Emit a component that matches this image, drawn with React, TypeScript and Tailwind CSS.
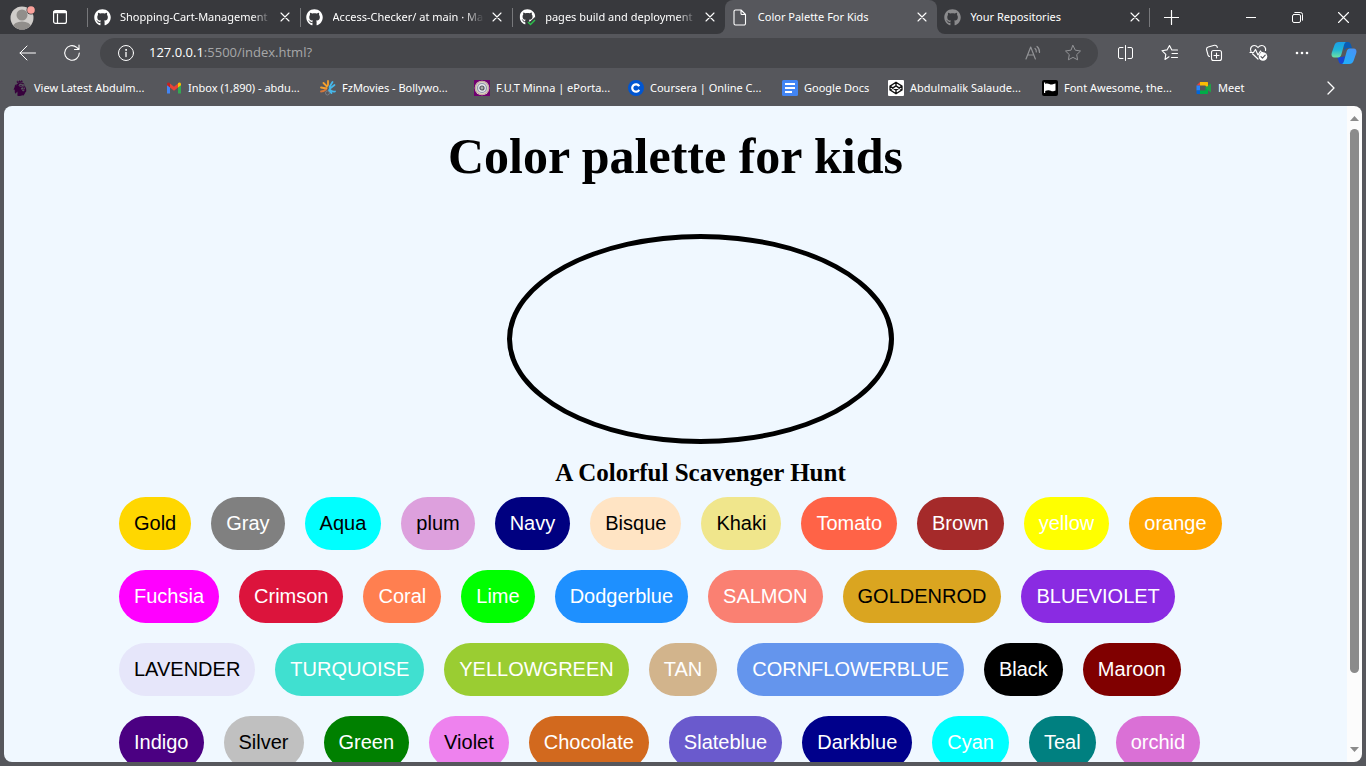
import React from 'react';
import { FaGithub } from 'react-icons/fa';
import { SiPremierleague } from 'react-icons/si';

const line = {
  fill: 'none',
  stroke: 'currentColor',
  strokeLinecap: 'round' as const,
  strokeLinejoin: 'round' as const,
};

function CloseIcon() {
  return (
    <svg width="10" height="10" viewBox="0 0 10 10" {...line} strokeWidth="1.1">
      <path d="M1 1l8 8M9 1L1 9" />
    </svg>
  );
}

function Octocat({ dim = false }: { dim?: boolean }) {
  return <FaGithub size={17} className={dim ? 'text-[#8b8b8d]' : 'text-white'} />;
}

function DeployIcon() {
  return (
    <svg width="17" height="17" viewBox="0 0 17 17">
      <FaGithub size={16} x="0.5" y="0" color="#fff" />
      <path d="M6 11l4.500 2 6-5.500V17H7z" fill="#38393d" />
      <path d="M9 13l2.500 2.500 4.500-4.500" fill="none" stroke="#2cc14c" strokeWidth="1.500" />
    </svg>
  );
}

function PageIcon() {
  return (
    <svg width="14" height="17" viewBox="0 0 14 17" {...line} strokeWidth="1.100">
      <path d="M2.500 1h5.500l4.500 4.500V14.500a1.500 1.500 0 0 1-1.500 1.500H2.500A1.500 1.500 0 0 1 1 14.500V2.500A1.500 1.500 0 0 1 2.500 1zM8 1v3.500a1 1 0 0 0 1 1h3.500" />
    </svg>
  );
}

const tabs = [
  { title: 'Shopping-Cart-Management', icon: <Octocat />, fade: true },
  { title: 'Access-Checker/ at main · Ma', icon: <Octocat />, fade: true },
  { title: 'pages build and deployment', icon: <DeployIcon />, fade: true },
  { title: 'Color Palette For Kids', icon: <PageIcon />, active: true },
  { title: 'Your Repositories', icon: <Octocat dim /> },
];

function TabStrip() {
  return (
    <header className="flex h-[34px] shrink-0 items-center bg-[#38393d]">
      <div className="flex w-[87px] shrink-0 items-center gap-[18px] pl-[10px]">
        <button aria-label="Profile">
          <svg width="25" height="25" viewBox="0 0 25 25">
            <defs>
              <clipPath id="face">
                <circle cx="12" cy="13" r="11.500" />
              </clipPath>
            </defs>
            <circle cx="12" cy="13" r="11.500" fill="#d0cdca" />
            <g clipPath="url(#face)" fill="#918e8b">
              <circle cx="12" cy="10" r="5.500" />
              <ellipse cx="12" cy="22" rx="9" ry="5.500" />
            </g>
            <circle cx="21" cy="5" r="4.500" fill="#38393d" />
            <circle cx="21" cy="5" r="3.800" fill="#fba19b" />
          </svg>
        </button>
        <button aria-label="Tab actions">
          <svg width="14" height="14" viewBox="0 0 14 14" {...line} strokeWidth="1.200">
            <rect x=".6" y=".6" width="12.800" height="12.800" rx="2" />
            <path d="M4.500 4v9" />
            <path d="M1.500 2h11" strokeWidth="2.500" />
          </svg>
        </button>
      </div>
      <nav className="flex h-full w-[1063px] min-w-0">
        {tabs.map((t, i) => (
          <div
            key={t.title}
            className={
              'relative flex h-full min-w-0 flex-1 items-center pr-[8px] pl-[6px] ' +
              (t.active ? 'rounded-t-[8px] bg-[#56575c]' : '')
            }
          >
            {i < 3 && <span className="absolute top-[8px] left-0 h-[19px] w-px bg-[#77787b]" />}
            {i === 4 && <span className="absolute top-[8px] right-0 h-[19px] w-px bg-[#77787b]" />}
            {t.active && (
              <>
                <svg className="absolute bottom-0 -left-[8px]" width="8" height="8" viewBox="0 0 8 8">
                  <path d="M8 0v8H0a8 8 0 0 0 8-8z" fill="#56575c" />
                </svg>
                <svg className="absolute -right-[8px] bottom-0" width="8" height="8" viewBox="0 0 8 8">
                  <path d="M0 0v8h8a8 8 0 0 1-8-8z" fill="#56575c" />
                </svg>
              </>
            )}
            <span className="flex w-[18px] shrink-0 justify-center">{t.icon}</span>
            <a
              href="#page"
              className={
                'ml-[9px] min-w-0 flex-1 overflow-hidden whitespace-nowrap ' +
                (t.fade ? '[mask-image:linear-gradient(to_right,black_calc(100%-20px),transparent)]' : '')
              }
            >
              {t.title}
            </a>
            <button aria-label={'Close ' + t.title} className="ml-[6px] p-[2px]">
              <CloseIcon />
            </button>
          </div>
        ))}
      </nav>
      <button aria-label="New tab" className="px-[14px]">
        <svg width="15" height="15" viewBox="0 0 15 15" {...line} strokeWidth="1.200">
          <path d="M7.500.5v14M.5 7.500h14" />
        </svg>
      </button>
      <div className="ml-auto flex h-full shrink-0">
        <button aria-label="Minimize" className="flex w-[46px] items-center justify-center">
          <svg width="10" height="10" viewBox="0 0 10 10" stroke="currentColor">
            <path d="M0 5.500h10" />
          </svg>
        </button>
        <button aria-label="Restore" className="flex w-[46px] items-center justify-center">
          <svg width="11" height="11" viewBox="0 0 11 11" {...line}>
            <rect x=".5" y="2.500" width="8" height="8" rx="1.500" />
            <path d="M2.800.5h5.700a2 2 0 0 1 2 2v5.700" />
          </svg>
        </button>
        <button aria-label="Close window" className="flex w-[46px] items-center justify-center">
          <svg width="11" height="11" viewBox="0 0 11 11" {...line} strokeWidth="1.100">
            <path d="M.5.5l10 10M10.500.5l-10 10" />
          </svg>
        </button>
      </div>
    </header>
  );
}

const starPath = 'M9 1.500l2.300 4.700 5.200.8-3.800 3.600.9 5.200L9 13.400l-4.600 2.400.9-5.200L1.500 7l5.200-.8z';

function ToolButton({ label, children }: { label: string; children: React.ReactNode }) {
  return (
    <button aria-label={label} className="flex h-[30px] w-[44px] shrink-0 items-center justify-center">
      {children}
    </button>
  );
}

function Toolbar() {
  return (
    <div className="flex shrink-0 items-center pt-[4px] pl-[6px]">
      <ToolButton label="Back">
        <svg width="18" height="16" viewBox="0 0 18 16" {...line}>
          <path d="M8 1L1 8l7 7M1 8h15.500" />
        </svg>
      </ToolButton>
      <ToolButton label="Refresh">
        <svg width="18" height="18" viewBox="0 0 18 18" {...line} strokeWidth="1.100">
          <path d="M16.300 9A7.300 7.300 0 1 1 13.700 3.400L16 5.500M16 1v4.500h-4.500" />
        </svg>
      </ToolButton>
      <div className="ml-[6px] flex h-[30px] min-w-0 flex-1 items-center rounded-full bg-[#46474b] pl-[17px]">
        <svg className="shrink-0" width="18" height="18" viewBox="0 0 18 18" {...line}>
          <circle cx="9" cy="9" r="7.500" />
          <path d="M9 8.500v4" strokeWidth="1.300" />
          <circle cx="9" cy="5.900" r=".5" fill="currentColor" />
        </svg>
        <a
          href="#page"
          className="ml-[14px] flex-1 truncate font-['Open_Sans',sans-serif] text-[13px] text-[#a6a7a9]"
        >
          <span className="text-white">127.0.0.1</span>:5500/index.html?
        </a>
        <button aria-label="Read aloud" className="flex w-[40px] justify-center text-[#929396]">
          <svg width="18" height="16" viewBox="0 0 18 16" {...line} strokeWidth="1.200">
            <path d="M2 14L6.700 2l4.700 12M3.500 10h6.400M11 3.500a4 4 0 0 1 1.300 3.500M13 1.500a7 7 0 0 1 2.500 6" />
          </svg>
        </button>
        <button aria-label="Add to favorites" className="mr-[5px] flex w-[40px] justify-center text-[#929396]">
          <svg width="18" height="18" viewBox="0 0 18 18" {...line}>
            <path d={starPath} />
          </svg>
        </button>
      </div>
      <div className="ml-[6px] flex shrink-0 items-center">
        <ToolButton label="Split screen">
          <svg width="18" height="18" viewBox="0 0 18 18" {...line}>
            <path d="M8.500 1.500v15M6 3.500H3A1.500 1.500 0 0 0 1.500 5v8A1.500 1.500 0 0 0 3 14.500h3M11 3.500h3A1.500 1.500 0 0 1 15.500 5v8a1.500 1.500 0 0 1-1.500 1.500h-3" />
          </svg>
        </ToolButton>
        <ToolButton label="Favorites">
          <svg width="18" height="18" viewBox="0 0 18 18" {...line} strokeWidth="1.100">
            <path d="M8 12.800l-4 2.700.8-5.200L1 6.700l5-.8L8.500 1.500l2.300 4.500H16.500M11 9.500h5.500M10.500 13.500h6" />
          </svg>
        </ToolButton>
        <ToolButton label="Collections">
          <svg width="18" height="18" viewBox="0 0 18 18" {...line} strokeWidth="1.100">
            <rect x="6.500" y="6.500" width="10" height="10" rx="2" />
            <path d="M11.500 9v5M9 11.500h5M4.500 12.500A2.500 2.500 0 0 1 3 11L1.500 5.500A2.400 2.400 0 0 1 3.200 3L9.500 1.300A2.300 2.300 0 0 1 12.300 3.500" />
          </svg>
        </ToolButton>
        <ToolButton label="Browser essentials">
          <svg width="19" height="18" viewBox="0 0 19 18" {...line} strokeWidth="1.200">
            <path d="M9 15L3.500 9.800M2 7.500C.5 4.500 2.500 1.500 5.200 1.500c1.700 0 3 1 3.800 2 .8-1 2.100-2 3.800-2 2.500 0 4.500 2.500 3.700 5M1 8.500h3.500l2-3L9 11l2.500-4 1 1.500h1" />
            <circle cx="14" cy="12.500" r="4.300" fill="#fff" stroke="none" />
            <path d="M12 12.700l1.500 1.500 2.700-3" stroke="#56575c" />
          </svg>
        </ToolButton>
        <ToolButton label="Settings and more">
          <svg width="14" height="4" viewBox="0 0 14 4" fill="currentColor">
            <circle cx="2" cy="2" r="1.300" />
            <circle cx="7" cy="2" r="1.300" />
            <circle cx="12" cy="2" r="1.300" />
          </svg>
        </ToolButton>
        <button aria-label="Copilot" className="mr-[9px] ml-[7px]">
          <svg width="26" height="24" viewBox="0 0 26 24">
            <defs>
              <linearGradient id="copA" x1="0" y1="0" x2="0" y2="1">
                <stop offset="0" stopColor="#1a9fe8" />
                <stop offset=".5" stopColor="#1fb5d8" />
                <stop offset="1" stopColor="#6fe3a0" />
              </linearGradient>
              <linearGradient id="copB" x1="1" y1="0" x2="0" y2="1">
                <stop offset="0" stopColor="#4c8ff5" />
                <stop offset="1" stopColor="#19b4fb" />
              </linearGradient>
            </defs>
            <path d="M12 1h5c2 0 2.500 1.500 3 3l1 3h-4c-2 0-3 1-3.500 3z" fill="#0a5cb4" />
            <path d="M5 16h6l3-1-1.500 8H11c-2 0-3-1-3.500-3-.5-2-1-4-2.500-4z" fill="#1746d2" />
            <path d="M8 1h7.500c-1.500 0-2 1.500-2.500 3L10.500 13c-.6 2-1.500 3.500-3.500 3.500H3.500C1 16.500 0 14.500.7 12L3.500 4C4.300 2 5.500 1 8 1z" fill="url(#copA)" />
            <path d="M18 23h-7.500c1.500 0 2-1.500 2.500-3l2.500-9c.6-2 1.500-3.500 3.500-3.500h3.500c2.500 0 3.500 2 2.800 4.500L22.500 20c-.8 2-2 3-4.500 3z" fill="url(#copB)" />
          </svg>
        </button>
      </div>
    </div>
  );
}

const bookmarks = [
  {
    label: 'View Latest Abdulm...',
    icon: <SiPremierleague size={16} color="#37003c" />,
  },
  {
    label: 'Inbox (1,890) - abdu...',
    icon: (
      <>
        <path d="M1 4v9.500h3V7z" fill="#4285f4" />
        <path d="M15 4v9.500h-3V7z" fill="#34a853" />
        <path d="M4 3.500l4 3.200 4-3.200v4L8 10.700 4 7.500z" fill="#ea4335" />
        <path d="M1 4.500C1 2.500 2.800 2 4 3.200v4.300L1 5.300z" fill="#c5221f" />
        <path d="M15 4.500c0-2-1.800-2.500-3-1.300v4.300l3-2.200z" fill="#fbbc04" />
      </>
    ),
  },
  {
    label: 'FzMovies - Bollywo...',
    icon: (
      <g fill="none" strokeWidth="1.800" strokeLinecap="round">
        <path d="M6.500 8.500L1 7.500M7 6.500L3.500 3M8 5V1" stroke="#f6a02c" />
        <path d="M1 11.500c2 0 3.500-.8 5-2" stroke="#d5783b" />
        <path d="M9.500 7l3-5M10 8.500L14.500 5M9.500 9.500c2 2 3.500 2.500 5.500 2" stroke="#46b8ea" />
        <path d="M9 10.500l2.500 2.500" stroke="#46b8ea" />
        <circle cx="7.500" cy="13" r="2" stroke="#777c85" strokeWidth="1" />
      </g>
    ),
  },
  {
    label: 'F.U.T Minna | ePorta...',
    icon: (
      <>
        <path d="M0 0h16v16H0z" fill="#710070" />
        <circle cx="8" cy="8" r="7.300" fill="#dcd6cc" />
        <circle cx="8" cy="8" r="6.500" fill="none" stroke="#b8958c" strokeWidth=".8" />
        <circle cx="8" cy="8" r="4.500" fill="#e6e6ee" stroke="#8d93ad" strokeWidth="1.200" />
        <circle cx="8" cy="8" r="2" fill="#aaa" stroke="#55565c" strokeWidth="1.200" />
      </>
    ),
  },
  {
    label: 'Coursera | Online C...',
    icon: (
      <>
        <circle cx="8" cy="8" r="8" fill="#0056d2" />
        <path d="M11.200 9.700a3.700 3.700 0 1 1 0-3.400" fill="none" stroke="#fff" strokeWidth="2.200" />
      </>
    ),
  },
  {
    label: 'Google Docs',
    icon: (
      <>
        <rect width="16" height="16" rx="1.500" fill="#4285f4" />
        <path d="M3 4h10M3 8h10M3 12h7" stroke="#fff" strokeWidth="1.800" />
      </>
    ),
  },
  {
    label: 'Abdulmalik Salaude...',
    icon: (
      <>
        <rect width="16" height="16" rx="1" fill="#fff" />
        <path
          d="M8 2.200l6 3.900v3.800l-6 3.900-6-3.900V6.100zM2 6.100l6 4 6-4M2 9.900l6-4 6 4M8 2.200v3.700M8 10.100v3.700"
          fill="none"
          stroke="#111"
          strokeWidth="1.300"
          strokeLinejoin="round"
        />
      </>
    ),
  },
  {
    label: 'Font Awesome, the...',
    icon: (
      <>
        <rect width="16" height="16" rx="2" fill="#000" />
        <path d="M2 2.500h1.200V13H2zM3.200 4c3-1.500 4.500 1 7 .5.800-.1 2-.7 3.300-1v7c-3.500 2-5-.8-7.300-.3-1 .2-2 .5-3 .8z" fill="#fff" />
      </>
    ),
  },
  {
    label: 'Meet',
    icon: (
      <>
        <path d="M4 2L.5 5.500H4z" fill="#ea4335" />
        <path d="M4 2h7c.8 0 1 .4 1 1v4.500L9.500 6V5.500H4z" fill="#fbbc04" />
        <path d="M.5 5.500H4v5H.5z" fill="#2684fc" />
        <path d="M.5 10.500H4V14H1.500c-.7 0-1-.4-1-1z" fill="#0066da" />
        <path d="M4 10.500h5.500V6L12 8v5c0 .7-.4 1-1 1H4z" fill="#00ac47" />
        <path d="M9.500 8L14 4c.5-.4 1-.2 1 .4v7.200c0 .6-.5.800-1 .4z" fill="#23a047" />
      </>
    ),
  },
];

function BookmarkBar() {
  return (
    <div className="flex h-[38px] shrink-0 items-center pt-[2px] pl-[12px]">
      {bookmarks.map((b) => (
        <a
          key={b.label}
          href="#page"
          className={
            'flex shrink-0 items-center gap-[6px] whitespace-nowrap ' +
            (b.label === 'Google Docs' ? 'w-[106px]' : 'w-[154px] last-of-type:w-[80px]')
          }
        >
          <svg className="shrink-0" width="16" height="16" viewBox="0 0 16 16">
            {b.icon}
          </svg>
          {b.label}
        </a>
      ))}
      <button aria-label="More favorites" className="mr-[31px] ml-auto">
        <svg width="8" height="14" viewBox="0 0 8 14" {...line} strokeWidth="1.300">
          <path d="M1 1l6 6-6 6" />
        </svg>
      </button>
    </div>
  );
}

const colors: { name: string; style: string }[] = [
  { name: 'Gold', style: 'bg-[#ffd700] text-black' },
  { name: 'Gray', style: 'bg-[#808080] text-white' },
  { name: 'Aqua', style: 'bg-[#00ffff] text-black' },
  { name: 'plum', style: 'bg-[#dda0dd] text-black' },
  { name: 'Navy', style: 'bg-[#000080] text-white' },
  { name: 'Bisque', style: 'bg-[#ffe4c4] text-black' },
  { name: 'Khaki', style: 'bg-[#f0e68c] text-black' },
  { name: 'Tomato', style: 'bg-[#ff6347] text-white' },
  { name: 'Brown', style: 'bg-[#a52a2a] text-white' },
  { name: 'yellow', style: 'bg-[#ffff00] text-white' },
  { name: 'orange', style: 'bg-[#ffa500] text-white' },
  { name: 'Fuchsia', style: 'bg-[#ff00ff] text-white' },
  { name: 'Crimson', style: 'bg-[#dc143c] text-white' },
  { name: 'Coral', style: 'bg-[#ff7f50] text-white' },
  { name: 'Lime', style: 'bg-[#00ff00] text-white' },
  { name: 'Dodgerblue', style: 'bg-[#1e90ff] text-white' },
  { name: 'SALMON', style: 'bg-[#fa8072] text-white' },
  { name: 'GOLDENROD', style: 'bg-[#daa520] text-black' },
  { name: 'BLUEVIOLET', style: 'bg-[#8a2be2] text-white' },
  { name: 'LAVENDER', style: 'bg-[#e6e6fa] text-black' },
  { name: 'TURQUOISE', style: 'bg-[#40e0d0] text-white' },
  { name: 'YELLOWGREEN', style: 'bg-[#9acd32] text-white' },
  { name: 'TAN', style: 'bg-[#d2b48c] text-white' },
  { name: 'CORNFLOWERBLUE', style: 'bg-[#6495ed] text-white' },
  { name: 'Black', style: 'bg-[#000000] text-white' },
  { name: 'Maroon', style: 'bg-[#800000] text-white' },
  { name: 'Indigo', style: 'bg-[#4b0082] text-white' },
  { name: 'Silver', style: 'bg-[#c0c0c0] text-black' },
  { name: 'Green', style: 'bg-[#008000] text-white' },
  { name: 'Violet', style: 'bg-[#ee82ee] text-black' },
  { name: 'Chocolate', style: 'bg-[#d2691e] text-white' },
  { name: 'Slateblue', style: 'bg-[#6a5acd] text-white' },
  { name: 'Darkblue', style: 'bg-[#00008b] text-white' },
  { name: 'Cyan', style: 'bg-[#00ffff] text-white' },
  { name: 'Teal', style: 'bg-[#008080] text-white' },
  { name: 'orchid', style: 'bg-[#da70d6] text-white' },
];

function PalettePage() {
  const [fill, setFill] = React.useState('');
  return (
    <main
      id="page"
      className="min-w-0 flex-1 overflow-hidden bg-[#f0f8ff] pt-[22px] font-['Liberation_Serif','Times_New_Roman',serif] text-black"
    >
      <h1 className="text-center text-[50px] leading-[57px] font-bold">Color palette for kids</h1>
      <section className="ml-[50px] px-[65px] pt-[49px]">
        <div className={'mx-auto h-[210px] w-[387px] rounded-[50%] border-5 border-black ' + fill} />
        <h2 className="mt-[15px] text-center text-[25px] leading-[28px] font-bold">A Colorful Scavenger Hunt</h2>
        <div className="mt-[10px] flex flex-wrap gap-[20px] font-['Liberation_Sans',Arial,sans-serif]">
          {colors.map((c) => (
            <button
              key={c.name}
              onClick={() => setFill(c.style)}
              className={'rounded-full p-[15px] text-[20px] leading-[23px] ' + c.style}
            >
              {c.name}
            </button>
          ))}
        </div>
      </section>
    </main>
  );
}

function ScrollTrack() {
  return (
    <div className="flex w-[15px] shrink-0 flex-col items-center bg-[#fcfcfc] py-[10px]">
      <svg width="9" height="5" viewBox="0 0 9 5" fill="#8b8b8b">
        <path d="M4.500 0L9 5H0z" />
      </svg>
      <div className="mt-[8px] flex w-full flex-1 justify-center">
        <div className="h-[88%] w-[9px] rounded-full bg-[#8b8b8b]" />
      </div>
      <svg width="9" height="5" viewBox="0 0 9 5" fill="#8b8b8b">
        <path d="M4.500 5L0 0h9z" />
      </svg>
    </div>
  );
}

export default function App() {
  return (
    <div className="flex h-screen flex-col overflow-hidden bg-[#56575c] font-['Noto_Sans','Open_Sans',sans-serif] text-[11px] text-white">
      <TabStrip />
      <Toolbar />
      <BookmarkBar />
      <div className="mx-[4px] mb-[4px] flex min-h-0 flex-1 overflow-hidden rounded-[8px]">
        <PalettePage />
        <ScrollTrack />
      </div>
    </div>
  );
}
